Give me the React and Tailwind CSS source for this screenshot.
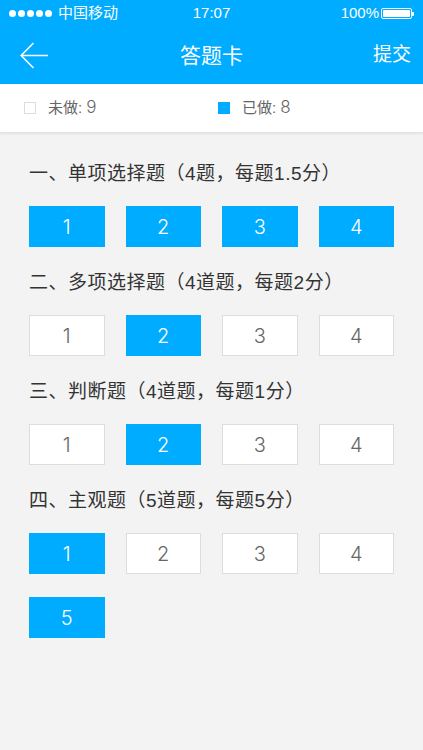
import React from 'react'

// answer-card sections: which questions are done
const sections = [
  { title: '一、单项选择题（4题，每题1.5分）', items: [true, true, true, true] },
  { title: '二、多项选择题（4道题，每题2分）', items: [false, true, false, false] },
  { title: '三、判断题（4道题，每题1分）', items: [false, true, false, false] },
  { title: '四、主观题（5道题，每题5分）', items: [true, false, false, false, true] },
]

const font = { fontFamily: '"Liberation Sans", "Noto Sans CJK SC", sans-serif' }
const thin = { fontFamily: 'Inter, "Noto Sans CJK SC", sans-serif', fontWeight: 300 }

const StatusBar = () => (
  <div className="h-[27px] flex items-center justify-between px-[9px] text-white text-[15px] relative">
    <div className="flex items-center gap-[6px]">
      <div className="flex gap-[2px]">
        {[0, 1, 2, 3, 4].map((i) => (
          <span key={i} className="w-[7px] h-[7px] rounded-full bg-white" />
        ))}
      </div>
      <span>中国移动</span>
    </div>
    <span className="absolute left-1/2 -translate-x-1/2">17:07</span>
    <div className="flex items-center gap-[2px]">
      <span>100%</span>
      <div className="flex items-center">
        <div className="w-[31px] h-[11px] border border-white rounded-[2px] p-[1px]">
          <div className="w-full h-full bg-white rounded-[1px]" />
        </div>
        <div className="w-[2px] h-[4px] bg-white rounded-r-[1px]" />
      </div>
    </div>
  </div>
)

const NavBar = () => (
  <div className="h-[57px] flex items-center justify-between px-[20px] relative text-white">
    <svg width="29" height="27" viewBox="0 0 29 27" fill="none" stroke="white" strokeWidth="1.6">
      <path d="M28 13.5H1.5M13.5 1L1.2 13.5L13.5 26" />
    </svg>
    <span className="absolute left-1/2 -translate-x-1/2 text-[21px]">答题卡</span>
    <span className="text-[19px] -mr-[8px]">提交</span>
  </div>
)

const Legend = () => (
  <div className="h-[49px] bg-white flex items-center px-[24px] text-[15px] text-[#666] shadow-[0_1px_2px_rgba(0,0,0,0.08)] border-b border-[#e4e4e4]">
    <div className="flex items-center w-[194px]">
      <span className="w-[12px] h-[12px] border border-[#dcdcdc] bg-white" />
      <span className="ml-[12px]">未做: <span className="text-[17px]" style={thin}>9</span></span>
    </div>
    <div className="flex items-center">
      <span className="w-[12px] h-[12px] bg-[#00acff]" />
      <span className="ml-[12px]">已做: <span className="text-[17px]" style={thin}>8</span></span>
    </div>
  </div>
)

export default function App() {
  return (
    <div className="w-[423px] min-h-[750px] bg-[#f3f3f3]" style={font}>
      <div className="bg-[#00acff]">
        <StatusBar />
        <NavBar />
      </div>
      <Legend />
      <div className="px-[29px] pt-[29px] pb-[40px]">
        {sections.map((sec, si) => (
          <div key={si} className={si > 0 ? 'mt-[24px]' : ''}>
            <div className="text-[19px] leading-[24px] tracking-[0.5px] text-[#333]">{sec.title}</div>
            <div className="mt-[20px] grid grid-cols-4 gap-x-[21px] gap-y-[23px]">
              {sec.items.map((done, i) => (
                <div
                  key={i}
                  style={thin}
                  className={
                    done
                      ? 'h-[41px] flex items-center justify-center bg-[#00acff] text-white text-[20px]'
                      : 'h-[41px] flex items-center justify-center bg-white border border-[#dddddd] text-[#666] text-[20px]'
                  }
                >
                  {i + 1}
                </div>
              ))}
            </div>
          </div>
        ))}
      </div>
    </div>
  )
}
